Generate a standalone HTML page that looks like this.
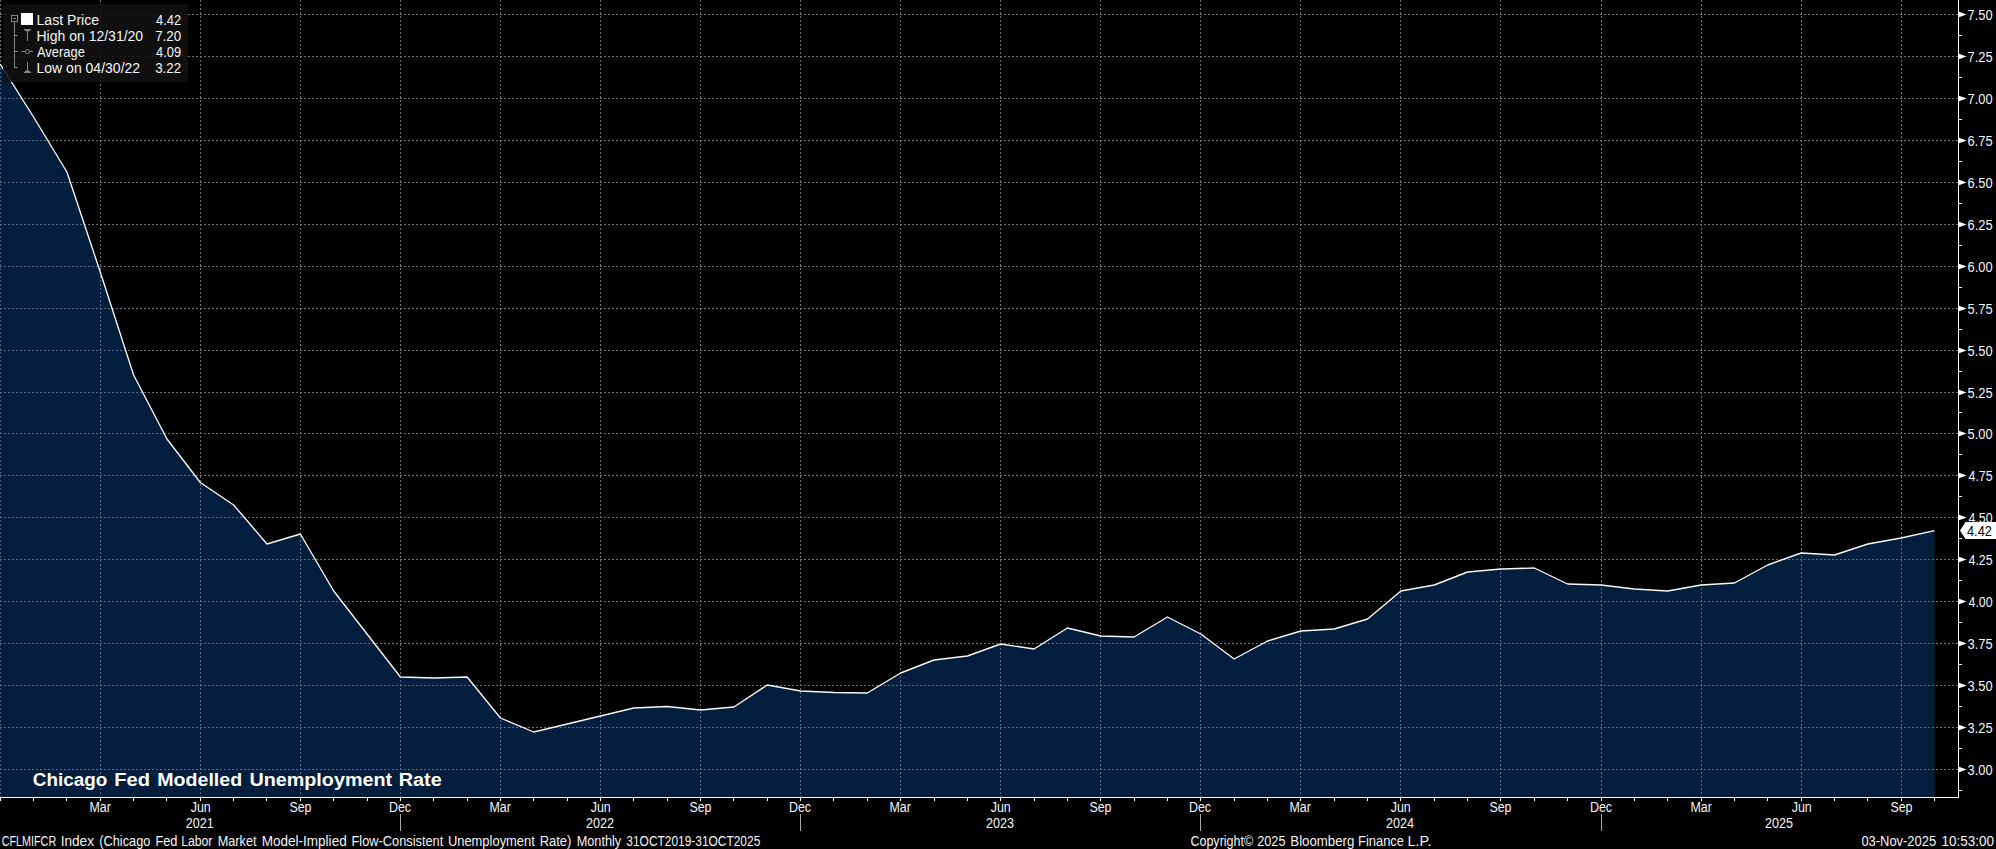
<!DOCTYPE html><html><head><meta charset="utf-8"><style>html,body{margin:0;padding:0;background:#000;overflow:hidden}svg{display:block}text{font-family:"Liberation Sans", sans-serif;white-space:pre}</style></head><body>
<svg width="1996" height="849" viewBox="0 0 1996 849">
<rect width="1996" height="849" fill="#000"/>
<defs><clipPath id="ar"><polygon points="0.20,797 0.20,64.00 33.55,117.00 66.90,172.00 100.25,272.00 133.60,375.00 166.95,439.00 200.30,482.50 233.65,505.00 267.00,544.00 300.35,534.00 333.70,591.00 367.05,634.00 400.40,677.00 433.75,678.00 467.10,677.00 500.45,718.00 533.80,732.00 567.15,724.00 600.50,716.00 633.85,708.00 667.20,706.50 700.55,710.00 733.90,707.00 767.25,685.00 800.60,691.00 833.95,692.50 867.30,693.00 900.65,673.00 934.00,660.00 967.35,656.00 1000.70,644.00 1034.05,649.00 1067.40,628.00 1100.75,636.00 1134.10,637.00 1167.45,617.00 1200.80,634.00 1234.15,659.00 1267.50,641.00 1300.85,631.00 1334.20,629.00 1367.55,619.00 1400.90,591.00 1434.25,585.00 1467.60,572.00 1500.95,569.00 1534.30,568.00 1567.65,584.00 1601.00,585.00 1634.35,589.00 1667.70,591.00 1701.05,585.00 1734.40,583.00 1767.75,565.00 1801.10,553.00 1834.45,555.00 1867.80,544.00 1901.15,538.00 1934.50,530.70 1934.50,797"/></clipPath></defs>
<path d="M0 769.5H1958 M0 727.5H1958 M0 685.5H1958 M0 643.5H1958 M0 601.5H1958 M0 559.5H1958 M0 517.5H1958 M0 475.5H1958 M0 433.5H1958 M0 392.5H1958 M0 350.5H1958 M0 308.5H1958 M0 266.5H1958 M0 224.5H1958 M0 182.5H1958 M0 140.5H1958 M0 98.5H1958 M0 56.5H1958 M0 14.5H1958 M0.5 0V797 M100.5 0V797 M200.5 0V797 M300.5 0V797 M400.5 0V797 M500.5 0V797 M600.5 0V797 M700.5 0V797 M800.5 0V797 M900.5 0V797 M1000.5 0V797 M1100.5 0V797 M1200.5 0V797 M1300.5 0V797 M1400.5 0V797 M1500.5 0V797 M1601.5 0V797 M1701.5 0V797 M1801.5 0V797 M1901.5 0V797" stroke="rgb(114,114,114)" stroke-width="1" stroke-dasharray="2 2" fill="none" shape-rendering="crispEdges"/>
<polygon points="0.20,797 0.20,64.00 33.55,117.00 66.90,172.00 100.25,272.00 133.60,375.00 166.95,439.00 200.30,482.50 233.65,505.00 267.00,544.00 300.35,534.00 333.70,591.00 367.05,634.00 400.40,677.00 433.75,678.00 467.10,677.00 500.45,718.00 533.80,732.00 567.15,724.00 600.50,716.00 633.85,708.00 667.20,706.50 700.55,710.00 733.90,707.00 767.25,685.00 800.60,691.00 833.95,692.50 867.30,693.00 900.65,673.00 934.00,660.00 967.35,656.00 1000.70,644.00 1034.05,649.00 1067.40,628.00 1100.75,636.00 1134.10,637.00 1167.45,617.00 1200.80,634.00 1234.15,659.00 1267.50,641.00 1300.85,631.00 1334.20,629.00 1367.55,619.00 1400.90,591.00 1434.25,585.00 1467.60,572.00 1500.95,569.00 1534.30,568.00 1567.65,584.00 1601.00,585.00 1634.35,589.00 1667.70,591.00 1701.05,585.00 1734.40,583.00 1767.75,565.00 1801.10,553.00 1834.45,555.00 1867.80,544.00 1901.15,538.00 1934.50,530.70 1934.50,797" fill="rgb(3, 29, 60)"/>
<path d="M0 769.5H1958 M0 727.5H1958 M0 685.5H1958 M0 643.5H1958 M0 601.5H1958 M0 559.5H1958 M0 517.5H1958 M0 475.5H1958 M0 433.5H1958 M0 392.5H1958 M0 350.5H1958 M0 308.5H1958 M0 266.5H1958 M0 224.5H1958 M0 182.5H1958 M0 140.5H1958 M0 98.5H1958 M0 56.5H1958 M0 14.5H1958 M0.5 0V797 M100.5 0V797 M200.5 0V797 M300.5 0V797 M400.5 0V797 M500.5 0V797 M600.5 0V797 M700.5 0V797 M800.5 0V797 M900.5 0V797 M1000.5 0V797 M1100.5 0V797 M1200.5 0V797 M1300.5 0V797 M1400.5 0V797 M1500.5 0V797 M1601.5 0V797 M1701.5 0V797 M1801.5 0V797 M1901.5 0V797" clip-path="url(#ar)" stroke="rgb(85, 111, 142)" stroke-width="1" stroke-dasharray="2 2" fill="none" shape-rendering="crispEdges"/>
<polyline points="0.20,64.00 33.55,117.00 66.90,172.00 100.25,272.00 133.60,375.00 166.95,439.00 200.30,482.50 233.65,505.00 267.00,544.00 300.35,534.00 333.70,591.00 367.05,634.00 400.40,677.00 433.75,678.00 467.10,677.00 500.45,718.00 533.80,732.00 567.15,724.00 600.50,716.00 633.85,708.00 667.20,706.50 700.55,710.00 733.90,707.00 767.25,685.00 800.60,691.00 833.95,692.50 867.30,693.00 900.65,673.00 934.00,660.00 967.35,656.00 1000.70,644.00 1034.05,649.00 1067.40,628.00 1100.75,636.00 1134.10,637.00 1167.45,617.00 1200.80,634.00 1234.15,659.00 1267.50,641.00 1300.85,631.00 1334.20,629.00 1367.55,619.00 1400.90,591.00 1434.25,585.00 1467.60,572.00 1500.95,569.00 1534.30,568.00 1567.65,584.00 1601.00,585.00 1634.35,589.00 1667.70,591.00 1701.05,585.00 1734.40,583.00 1767.75,565.00 1801.10,553.00 1834.45,555.00 1867.80,544.00 1901.15,538.00 1934.50,530.70" fill="none" stroke="#f8f8f8" stroke-width="1.35" stroke-linejoin="round"/>
<path d="M1958.5 0V797.5H0" stroke="#fff" stroke-width="1" fill="none" shape-rendering="crispEdges"/>
<polygon points="1959,766.7 1966.5,769.5 1959,772.3" fill="#fff"/>
<text x="1967.58" y="775" font-size="14" font-weight="400" fill="#f4f4f4" textLength="25.05" lengthAdjust="spacingAndGlyphs">3.00</text>
<polygon points="1959,724.7 1966.5,727.5 1959,730.3" fill="#fff"/>
<text x="1967.58" y="733" font-size="14" font-weight="400" fill="#f4f4f4" textLength="25.05" lengthAdjust="spacingAndGlyphs">3.25</text>
<polygon points="1959,682.7 1966.5,685.5 1959,688.3" fill="#fff"/>
<text x="1967.58" y="691" font-size="14" font-weight="400" fill="#f4f4f4" textLength="25.05" lengthAdjust="spacingAndGlyphs">3.50</text>
<polygon points="1959,640.7 1966.5,643.5 1959,646.3" fill="#fff"/>
<text x="1967.58" y="649" font-size="14" font-weight="400" fill="#f4f4f4" textLength="25.05" lengthAdjust="spacingAndGlyphs">3.75</text>
<polygon points="1959,598.7 1966.5,601.5 1959,604.3" fill="#fff"/>
<text x="1968.50" y="607" font-size="14" font-weight="400" fill="#f4f4f4" textLength="24.12" lengthAdjust="spacingAndGlyphs">4.00</text>
<polygon points="1959,556.7 1966.5,559.5 1959,562.3" fill="#fff"/>
<text x="1968.50" y="565" font-size="14" font-weight="400" fill="#f4f4f4" textLength="24.12" lengthAdjust="spacingAndGlyphs">4.25</text>
<polygon points="1959,514.7 1966.5,517.5 1959,520.3" fill="#fff"/>
<text x="1968.50" y="523" font-size="14" font-weight="400" fill="#f4f4f4" textLength="24.12" lengthAdjust="spacingAndGlyphs">4.50</text>
<polygon points="1959,472.7 1966.5,475.5 1959,478.3" fill="#fff"/>
<text x="1968.50" y="481" font-size="14" font-weight="400" fill="#f4f4f4" textLength="24.12" lengthAdjust="spacingAndGlyphs">4.75</text>
<polygon points="1959,430.7 1966.5,433.5 1959,436.3" fill="#fff"/>
<text x="1967.58" y="439" font-size="14" font-weight="400" fill="#f4f4f4" textLength="25.05" lengthAdjust="spacingAndGlyphs">5.00</text>
<polygon points="1959,389.7 1966.5,392.5 1959,395.3" fill="#fff"/>
<text x="1967.58" y="398" font-size="14" font-weight="400" fill="#f4f4f4" textLength="25.05" lengthAdjust="spacingAndGlyphs">5.25</text>
<polygon points="1959,347.7 1966.5,350.5 1959,353.3" fill="#fff"/>
<text x="1967.58" y="356" font-size="14" font-weight="400" fill="#f4f4f4" textLength="25.05" lengthAdjust="spacingAndGlyphs">5.50</text>
<polygon points="1959,305.7 1966.5,308.5 1959,311.3" fill="#fff"/>
<text x="1967.58" y="314" font-size="14" font-weight="400" fill="#f4f4f4" textLength="25.05" lengthAdjust="spacingAndGlyphs">5.75</text>
<polygon points="1959,263.7 1966.5,266.5 1959,269.3" fill="#fff"/>
<text x="1967.58" y="272" font-size="14" font-weight="400" fill="#f4f4f4" textLength="25.05" lengthAdjust="spacingAndGlyphs">6.00</text>
<polygon points="1959,221.7 1966.5,224.5 1959,227.3" fill="#fff"/>
<text x="1967.58" y="230" font-size="14" font-weight="400" fill="#f4f4f4" textLength="25.05" lengthAdjust="spacingAndGlyphs">6.25</text>
<polygon points="1959,179.7 1966.5,182.5 1959,185.3" fill="#fff"/>
<text x="1967.58" y="188" font-size="14" font-weight="400" fill="#f4f4f4" textLength="25.05" lengthAdjust="spacingAndGlyphs">6.50</text>
<polygon points="1959,137.7 1966.5,140.5 1959,143.3" fill="#fff"/>
<text x="1967.58" y="146" font-size="14" font-weight="400" fill="#f4f4f4" textLength="25.05" lengthAdjust="spacingAndGlyphs">6.75</text>
<polygon points="1959,95.7 1966.5,98.5 1959,101.3" fill="#fff"/>
<text x="1967.58" y="104" font-size="14" font-weight="400" fill="#f4f4f4" textLength="25.05" lengthAdjust="spacingAndGlyphs">7.00</text>
<polygon points="1959,53.7 1966.5,56.5 1959,59.3" fill="#fff"/>
<text x="1967.58" y="62" font-size="14" font-weight="400" fill="#f4f4f4" textLength="25.05" lengthAdjust="spacingAndGlyphs">7.25</text>
<polygon points="1959,11.7 1966.5,14.5 1959,17.3" fill="#fff"/>
<text x="1967.58" y="20" font-size="14" font-weight="400" fill="#f4f4f4" textLength="25.05" lengthAdjust="spacingAndGlyphs">7.50</text>
<path d="M1958 748.5H1962 M1958 706.5H1962 M1958 664.5H1962 M1958 622.5H1962 M1958 580.5H1962 M1958 538.5H1962 M1958 496.5H1962 M1958 454.5H1962 M1958 412.5H1962 M1958 371.5H1962 M1958 329.5H1962 M1958 287.5H1962 M1958 245.5H1962 M1958 203.5H1962 M1958 161.5H1962 M1958 119.5H1962 M1958 77.5H1962 M1958 35.5H1962 M1958 790.5H1962 M0.5 797V801 M33.5 797V801 M66.5 797V801 M100.5 797V801 M133.5 797V801 M166.5 797V801 M200.5 797V801 M233.5 797V801 M266.5 797V801 M300.5 797V801 M333.5 797V801 M367.5 797V801 M400.5 797V801 M433.5 797V801 M467.5 797V801 M500.5 797V801 M533.5 797V801 M567.5 797V801 M600.5 797V801 M633.5 797V801 M667.5 797V801 M700.5 797V801 M733.5 797V801 M767.5 797V801 M800.5 797V801 M833.5 797V801 M867.5 797V801 M900.5 797V801 M934.5 797V801 M967.5 797V801 M1000.5 797V801 M1034.5 797V801 M1067.5 797V801 M1100.5 797V801 M1134.5 797V801 M1167.5 797V801 M1200.5 797V801 M1234.5 797V801 M1267.5 797V801 M1300.5 797V801 M1334.5 797V801 M1367.5 797V801 M1400.5 797V801 M1434.5 797V801 M1467.5 797V801 M1500.5 797V801 M1534.5 797V801 M1567.5 797V801 M1601.5 797V801 M1634.5 797V801 M1667.5 797V801 M1701.5 797V801 M1734.5 797V801 M1767.5 797V801 M1801.5 797V801 M1834.5 797V801 M1867.5 797V801 M1901.5 797V801 M1934.5 797V801" stroke="#fff" stroke-width="1" fill="none" shape-rendering="crispEdges"/>
<text x="89.38" y="812" font-size="14" font-weight="400" fill="#f4f4f4" textLength="21.47" lengthAdjust="spacingAndGlyphs">Mar</text>
<text x="190.71" y="812" font-size="14" font-weight="400" fill="#f4f4f4" textLength="20.09" lengthAdjust="spacingAndGlyphs">Jun</text>
<text x="289.38" y="812" font-size="14" font-weight="400" fill="#f4f4f4" textLength="22.18" lengthAdjust="spacingAndGlyphs">Sep</text>
<text x="388.93" y="812" font-size="14" font-weight="400" fill="#f4f4f4" textLength="22.17" lengthAdjust="spacingAndGlyphs">Dec</text>
<text x="489.38" y="812" font-size="14" font-weight="400" fill="#f4f4f4" textLength="21.47" lengthAdjust="spacingAndGlyphs">Mar</text>
<text x="590.71" y="812" font-size="14" font-weight="400" fill="#f4f4f4" textLength="20.09" lengthAdjust="spacingAndGlyphs">Jun</text>
<text x="689.38" y="812" font-size="14" font-weight="400" fill="#f4f4f4" textLength="22.18" lengthAdjust="spacingAndGlyphs">Sep</text>
<text x="788.93" y="812" font-size="14" font-weight="400" fill="#f4f4f4" textLength="22.17" lengthAdjust="spacingAndGlyphs">Dec</text>
<text x="889.38" y="812" font-size="14" font-weight="400" fill="#f4f4f4" textLength="21.47" lengthAdjust="spacingAndGlyphs">Mar</text>
<text x="990.71" y="812" font-size="14" font-weight="400" fill="#f4f4f4" textLength="20.09" lengthAdjust="spacingAndGlyphs">Jun</text>
<text x="1089.38" y="812" font-size="14" font-weight="400" fill="#f4f4f4" textLength="22.18" lengthAdjust="spacingAndGlyphs">Sep</text>
<text x="1188.93" y="812" font-size="14" font-weight="400" fill="#f4f4f4" textLength="22.17" lengthAdjust="spacingAndGlyphs">Dec</text>
<text x="1289.38" y="812" font-size="14" font-weight="400" fill="#f4f4f4" textLength="21.47" lengthAdjust="spacingAndGlyphs">Mar</text>
<text x="1390.71" y="812" font-size="14" font-weight="400" fill="#f4f4f4" textLength="20.09" lengthAdjust="spacingAndGlyphs">Jun</text>
<text x="1489.38" y="812" font-size="14" font-weight="400" fill="#f4f4f4" textLength="22.18" lengthAdjust="spacingAndGlyphs">Sep</text>
<text x="1589.93" y="812" font-size="14" font-weight="400" fill="#f4f4f4" textLength="22.17" lengthAdjust="spacingAndGlyphs">Dec</text>
<text x="1690.38" y="812" font-size="14" font-weight="400" fill="#f4f4f4" textLength="21.47" lengthAdjust="spacingAndGlyphs">Mar</text>
<text x="1791.71" y="812" font-size="14" font-weight="400" fill="#f4f4f4" textLength="20.09" lengthAdjust="spacingAndGlyphs">Jun</text>
<text x="1890.38" y="812" font-size="14" font-weight="400" fill="#f4f4f4" textLength="22.18" lengthAdjust="spacingAndGlyphs">Sep</text>
<path d="M400.5 814V831 M800.5 814V831 M1200.5 814V831 M1601.5 814V831" stroke="#a8a8a8" stroke-width="1" fill="none" shape-rendering="crispEdges"/>
<text x="185.80" y="828" font-size="14" font-weight="400" fill="#f4f4f4" textLength="28.04" lengthAdjust="spacingAndGlyphs">2021</text>
<text x="586.10" y="828" font-size="14" font-weight="400" fill="#f4f4f4" textLength="28.04" lengthAdjust="spacingAndGlyphs">2022</text>
<text x="986.10" y="828" font-size="14" font-weight="400" fill="#f4f4f4" textLength="28.04" lengthAdjust="spacingAndGlyphs">2023</text>
<text x="1386.10" y="828" font-size="14" font-weight="400" fill="#f4f4f4" textLength="28.04" lengthAdjust="spacingAndGlyphs">2024</text>
<text x="1765.10" y="828" font-size="14" font-weight="400" fill="#f4f4f4" textLength="28.04" lengthAdjust="spacingAndGlyphs">2025</text>
<text x="1.73" y="846" font-size="14" font-weight="400" fill="#f4f4f4" textLength="54.47" lengthAdjust="spacingAndGlyphs">CFLMIFCR</text>
<text x="60.63" y="846" font-size="14" font-weight="400" fill="#f4f4f4" textLength="33.32" lengthAdjust="spacingAndGlyphs">Index</text>
<text x="99.29" y="846" font-size="14" font-weight="400" fill="#f4f4f4" textLength="51.04" lengthAdjust="spacingAndGlyphs">(Chicago</text>
<text x="155.39" y="846" font-size="14" font-weight="400" fill="#f4f4f4" textLength="22.04" lengthAdjust="spacingAndGlyphs">Fed</text>
<text x="181.13" y="846" font-size="14" font-weight="400" fill="#f4f4f4" textLength="31.31" lengthAdjust="spacingAndGlyphs">Labor</text>
<text x="217.69" y="846" font-size="14" font-weight="400" fill="#f4f4f4" textLength="38.82" lengthAdjust="spacingAndGlyphs">Market</text>
<text x="261.73" y="846" font-size="14" font-weight="400" fill="#f4f4f4" textLength="84.97" lengthAdjust="spacingAndGlyphs">Model-Implied</text>
<text x="351.49" y="846" font-size="14" font-weight="400" fill="#f4f4f4" textLength="91.76" lengthAdjust="spacingAndGlyphs">Flow-Consistent</text>
<text x="447.88" y="846" font-size="14" font-weight="400" fill="#f4f4f4" textLength="86.97" lengthAdjust="spacingAndGlyphs">Unemployment</text>
<text x="539.67" y="846" font-size="14" font-weight="400" fill="#f4f4f4" textLength="31.74" lengthAdjust="spacingAndGlyphs">Rate)</text>
<text x="576.69" y="846" font-size="14" font-weight="400" fill="#f4f4f4" textLength="44.54" lengthAdjust="spacingAndGlyphs">Monthly</text>
<text x="626.35" y="846" font-size="14" font-weight="400" fill="#f4f4f4" textLength="133.92" lengthAdjust="spacingAndGlyphs">31OCT2019-31OCT2025</text>
<text x="1190.41" y="846" font-size="14" font-weight="400" fill="#f4f4f4" textLength="62.80" lengthAdjust="spacingAndGlyphs">Copyright©</text>
<text x="1257.30" y="846" font-size="14" font-weight="400" fill="#f4f4f4" textLength="28.14" lengthAdjust="spacingAndGlyphs">2025</text>
<text x="1290.35" y="846" font-size="14" font-weight="400" fill="#f4f4f4" textLength="64.01" lengthAdjust="spacingAndGlyphs">Bloomberg</text>
<text x="1357.98" y="846" font-size="14" font-weight="400" fill="#f4f4f4" textLength="46.08" lengthAdjust="spacingAndGlyphs">Finance</text>
<text x="1407.46" y="846" font-size="14" font-weight="400" fill="#f4f4f4" textLength="23.99" lengthAdjust="spacingAndGlyphs">L.P.</text>
<text x="1861.40" y="846" font-size="14" font-weight="400" fill="#f4f4f4" textLength="74.74" lengthAdjust="spacingAndGlyphs">03-Nov-2025</text>
<text x="1941.54" y="846" font-size="14" font-weight="400" fill="#f4f4f4" textLength="52.55" lengthAdjust="spacingAndGlyphs">10:53:00</text>
<text x="32.85" y="786" font-size="18" font-weight="700" fill="#fff" textLength="74.36" lengthAdjust="spacingAndGlyphs">Chicago</text>
<text x="114.28" y="786" font-size="18" font-weight="700" fill="#fff" textLength="35.86" lengthAdjust="spacingAndGlyphs">Fed</text>
<text x="157.31" y="786" font-size="18" font-weight="700" fill="#fff" textLength="84.89" lengthAdjust="spacingAndGlyphs">Modelled</text>
<text x="249.40" y="786" font-size="18" font-weight="700" fill="#fff" textLength="142.73" lengthAdjust="spacingAndGlyphs">Unemployment</text>
<text x="398.70" y="786" font-size="18" font-weight="700" fill="#fff" textLength="43.02" lengthAdjust="spacingAndGlyphs">Rate</text>
<polygon points="1960,530.5 1965.5,522.0 1996,522.0 1996,539.0 1965.5,539.0" fill="#fff"/>
<text x="1967.00" y="536" font-size="14" font-weight="400" fill="#000" textLength="24.83" lengthAdjust="spacingAndGlyphs">4.42</text>
<rect x="3" y="4" width="185" height="78" rx="1" fill="rgba(17,17,17,0.88)"/>
<path d="M11.5 15.5h6v6h-6z M13 18.5h3 M14.5 21.5V67.5H18 M14.5 35.5H18 M14.5 51.5H18 M27.5 30V40.5 M27.5 61.5V71 M21 51.5h4 M30 51.5h3" stroke="#868686" stroke-width="1" fill="none" shape-rendering="crispEdges"/>
<circle cx="27.5" cy="51.5" r="2" stroke="#868686" stroke-width="1" fill="none"/>
<path d="M24 29h7v1l-2.5 1.5h-2l-2.5-1.5z M24 73h7v-1l-2.5-1.5h-2l-2.5 1.5z" fill="#868686"/>
<rect x="21" y="13" width="12" height="12" fill="#fff"/>
<text x="36.50" y="25" font-size="14" font-weight="400" fill="#f4f4f4" textLength="62.56" lengthAdjust="spacingAndGlyphs">Last Price</text>
<text x="156.10" y="25" font-size="14" font-weight="400" fill="#f4f4f4" textLength="25.03" lengthAdjust="spacingAndGlyphs">4.42</text>
<text x="36.50" y="41" font-size="14" font-weight="400" fill="#f4f4f4" textLength="106.64" lengthAdjust="spacingAndGlyphs">High on 12/31/20</text>
<text x="155.15" y="41" font-size="14" font-weight="400" fill="#f4f4f4" textLength="25.99" lengthAdjust="spacingAndGlyphs">7.20</text>
<text x="37.00" y="57" font-size="14" font-weight="400" fill="#f4f4f4" textLength="47.84" lengthAdjust="spacingAndGlyphs">Average</text>
<text x="156.10" y="57" font-size="14" font-weight="400" fill="#f4f4f4" textLength="25.03" lengthAdjust="spacingAndGlyphs">4.09</text>
<text x="36.50" y="73" font-size="14" font-weight="400" fill="#f4f4f4" textLength="103.63" lengthAdjust="spacingAndGlyphs">Low on 04/30/22</text>
<text x="155.15" y="73" font-size="14" font-weight="400" fill="#f4f4f4" textLength="25.99" lengthAdjust="spacingAndGlyphs">3.22</text>
</svg></body></html>
